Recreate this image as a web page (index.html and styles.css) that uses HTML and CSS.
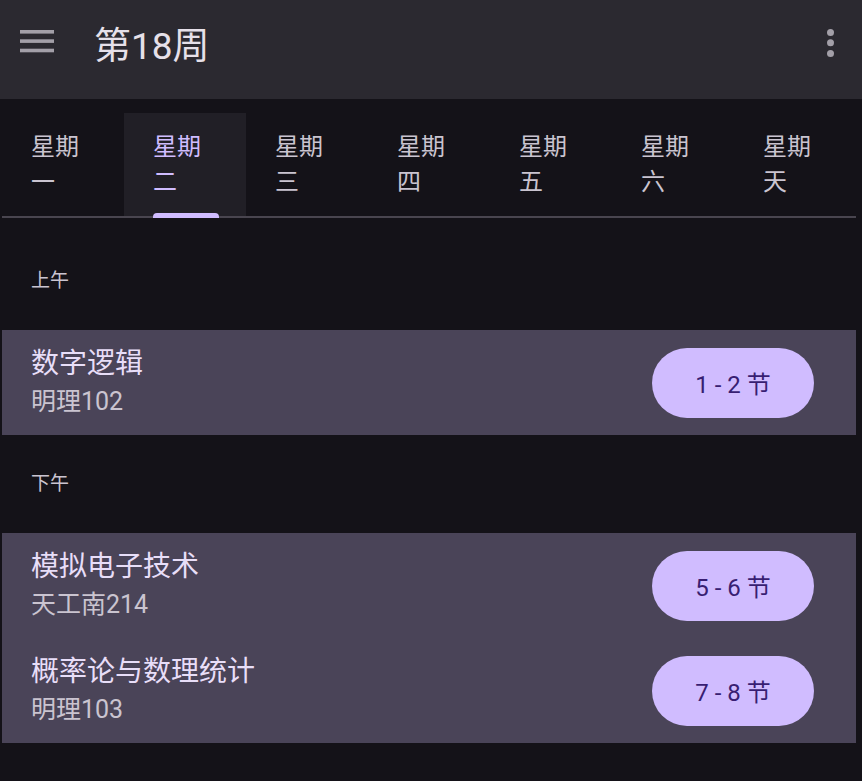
FILE: index.html
```html
<!DOCTYPE html>
<html lang="zh">
<head>
<meta charset="utf-8">
<title>第18周</title>
<link rel="stylesheet" href="styles.css">
</head>
<body>
<header class="appbar">
  <button class="icon-btn menu" aria-label="menu">
    <svg width="34" height="23" viewBox="0 0 34 23"><rect x="0" y="0" width="34" height="3.6" fill="#a39fa8"/><rect x="0" y="9.3" width="34" height="3.6" fill="#a39fa8"/><rect x="0" y="18.7" width="34" height="3.6" fill="#a39fa8"/></svg>
  </button>
  <h1 class="title">第18周</h1>
  <button class="icon-btn more" aria-label="more">
    <svg width="7" height="28" viewBox="0 0 7 28"><circle cx="3.5" cy="3.5" r="3.5" fill="#a39fa8"/><circle cx="3.5" cy="13.8" r="3.5" fill="#a39fa8"/><circle cx="3.5" cy="24.5" r="3.5" fill="#a39fa8"/></svg>
  </button>
</header>

<nav class="tabs">
  <div class="tab">星期<br>一</div>
  <div class="tab active">星期<br>二<span class="indicator"></span></div>
  <div class="tab">星期<br>三</div>
  <div class="tab">星期<br>四</div>
  <div class="tab">星期<br>五</div>
  <div class="tab">星期<br>六</div>
  <div class="tab">星期<br>天</div>
</nav>

<main class="content">
  <section class="section">
    <div class="section-label">上午</div>
    <div class="card">
      <div class="course">
        <div class="info">
          <div class="name">数字逻辑</div>
          <div class="room">明理102</div>
        </div>
        <div class="chip">1 - 2 节</div>
      </div>
    </div>
  </section>
  <section class="section">
    <div class="section-label">下午</div>
    <div class="card">
      <div class="course">
        <div class="info">
          <div class="name">模拟电子技术</div>
          <div class="room">天工南214</div>
        </div>
        <div class="chip">5 - 6 节</div>
      </div>
      <div class="course">
        <div class="info">
          <div class="name">概率论与数理统计</div>
          <div class="room">明理103</div>
        </div>
        <div class="chip">7 - 8 节</div>
      </div>
    </div>
  </section>
</main>
</body>
</html>
```

FILE: styles.css
```css
* { box-sizing: border-box; }
html, body {
  margin: 0;
  padding: 0;
  background: #141218;
  font-family: Roboto, "Noto Sans CJK SC", sans-serif;
  color: #e6e0e9;
}
.appbar {
  height: 99px;
  background: #2b2930;
  display: flex;
  align-items: flex-start;
  padding: 0 28px 0 20px;
}
.icon-btn {
  background: none;
  border: 0;
  padding: 0;
  display: flex;
  cursor: pointer;
}
.menu { margin-top: 30px; }
.more { margin-left: auto; margin-top: 29px; }
.title {
  margin: 23px 0 0 40px;
  font-weight: 400;
  font-size: 37px;
  line-height: 48px;
  color: #e6e0e9;
}
.tabs {
  display: flex;
  margin: 14px 6px 0 2px;
  border-bottom: 2px solid #49454f;
}
.tab {
  position: relative;
  width: 122px;
  height: 103px;
  padding: 17px 0 0 29px;
  font-size: 24px;
  line-height: 35px;
  color: #cac4d0;
}
.tab.active {
  background: #211f26;
  color: #d0bcff;
}
.indicator {
  position: absolute;
  left: 29px;
  bottom: -2px;
  width: 66px;
  height: 5px;
  background: #d0bcff;
  border-radius: 4px 4px 0 0;
}
.content {
  padding-top: 14px;
  margin: 0 6px 0 2px;
}
.section-label {
  height: 98px;
  display: flex;
  align-items: center;
  padding: 0 0 5px 29px;
  font-size: 19px;
  color: #cac4d0;
}
.card {
  background: #4a4458;
}
.course {
  height: 105px;
  display: flex;
  align-items: center;
  padding: 0 42px 0 29px;
}
.info { flex: 1; padding-top: 2px; }
.name {
  font-size: 28px;
  line-height: 36px;
  color: #e8def8;
}
.room {
  margin-top: 1px;
  font-size: 25px;
  line-height: 38px;
  color: #cac4d0;
}
.chip {
  width: 162px;
  height: 70px;
  border-radius: 35px;
  background: #d0bcff;
  color: #381e72;
  font-size: 24px;
  display: flex;
  align-items: center;
  justify-content: center;
}
```
